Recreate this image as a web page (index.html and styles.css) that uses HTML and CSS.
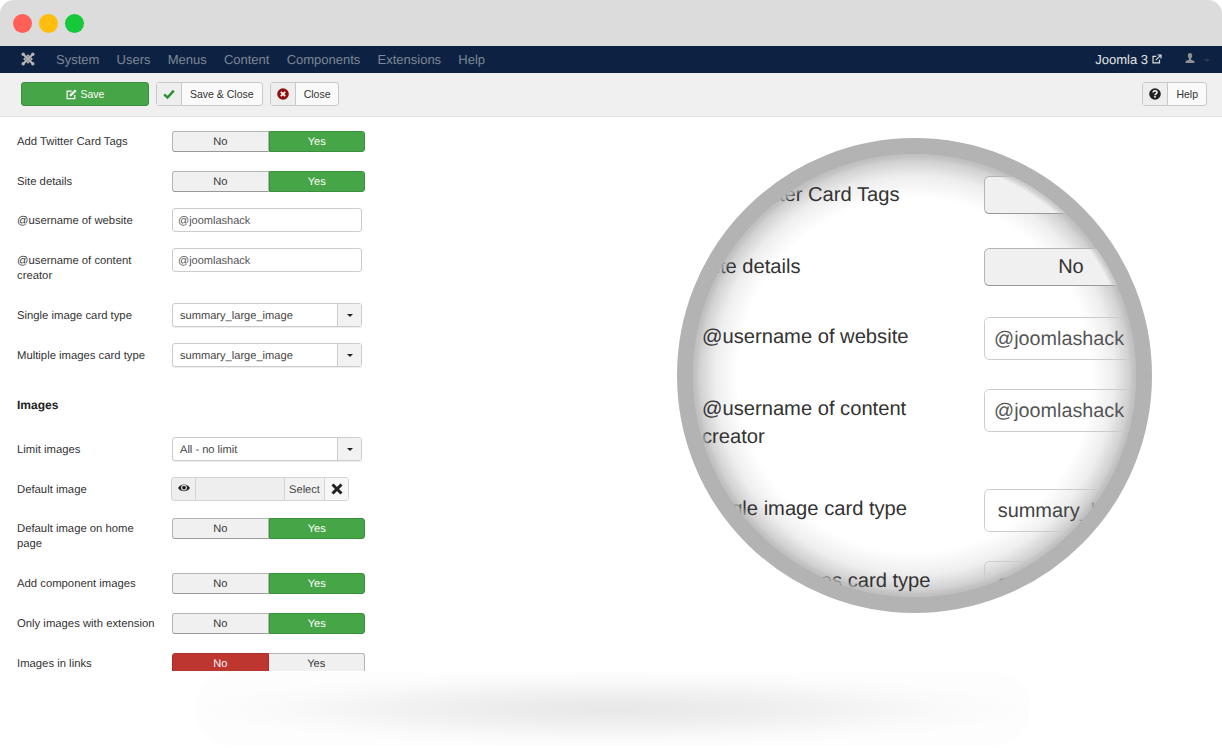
FILE: index.html
```html
<!DOCTYPE html>
<html lang="en">
<head>
    <meta charset="UTF-8">
    <meta name="viewport" content="width=device-width, initial-scale=1.0">
    <title>Joomla 3 - Twitter Card Tags</title>
    <link rel="stylesheet" href="styles.css">
</head>
<body>
    <div class="window">
        <div class="titlebar">
            <span class="dot dot-red"></span>
            <span class="dot dot-yellow"></span>
            <span class="dot dot-green"></span>
        </div>

        <nav class="navbar">
            <svg class="logo" viewBox="0 0 14 14" fill="none" stroke="#b4b4b4" stroke-width="2.1">
                <path d="M2.5 2.5 11.5 11.5M11.5 2.5 2.5 11.5"/>
                <path d="M7 3.2 10.8 7 7 10.8 3.2 7Z" stroke-width="1.5"/>
                <circle cx="2.2" cy="2.2" r="1.7" fill="#b4b4b4" stroke="none"/>
                <circle cx="11.8" cy="2.2" r="1.7" fill="#b4b4b4" stroke="none"/>
                <circle cx="2.2" cy="11.8" r="1.7" fill="#b4b4b4" stroke="none"/>
                <circle cx="11.8" cy="11.8" r="1.7" fill="#b4b4b4" stroke="none"/>
            </svg>
            <a class="nav-link">System</a>
            <a class="nav-link">Users</a>
            <a class="nav-link">Menus</a>
            <a class="nav-link">Content</a>
            <a class="nav-link">Components</a>
            <a class="nav-link">Extensions</a>
            <a class="nav-link">Help</a>
            <a class="site-link">Joomla 3
                <svg class="ext-icon" viewBox="0 0 10 10" fill="none" stroke="#ddd" stroke-width="1.2">
                    <path d="M7.5 5.8V8.9H1V2.4H4.2"/>
                    <path d="M3.8 6.2 8.6 1.4M5.6 1H9V4.4"/>
                </svg>
            </a>
            <svg class="user-icon" viewBox="0 0 10 11" fill="#8d8f93">
                <path d="M5 0C3.5 0 2.8 1.1 2.8 2.6 2.8 4 3.4 5 3.9 5.6V6.7L.6 8V10H9.4V8L6.1 6.7V5.6C6.6 5 7.2 4 7.2 2.6 7.2 1.1 6.5 0 5 0Z"/>
            </svg>
            <span class="user-caret"></span>
        </nav>

        <div class="toolbar">
            <button class="btn-save">
                <svg class="icon" viewBox="0 0 12 12" fill="none" stroke="#fff" stroke-width="1.3">
                    <path d="M9.6 6.6V10.4H1.2V2.4H6.2"/>
                    <path d="M4.6 5.8 9.8.9 11.2 2.3 6.1 7.4 4.3 7.7Z" fill="#fff" stroke-width=".6"/>
                </svg>
                Save
            </button>
            <button class="btn">
                <span class="btn-icon">
                    <svg class="icon" viewBox="0 0 12 12" fill="none" stroke="#2f8f2f" stroke-width="2.4"><path d="M1.2 6.3 4.5 9.5 10.8 2.6"/></svg>
                </span>
                <span class="btn-label">Save &amp; Close</span>
            </button>
            <button class="btn">
                <span class="btn-icon">
                    <svg class="icon" viewBox="0 0 12 12">
                        <circle cx="6" cy="6" r="5.8" fill="#8f1010"/>
                        <path d="M3.8 3.8 8.2 8.2M8.2 3.8 3.8 8.2" stroke="#fff" stroke-width="1.7"/>
                    </svg>
                </span>
                <span class="btn-label">Close</span>
            </button>
            <button class="btn btn-help">
                <span class="btn-icon">
                    <svg class="icon" viewBox="0 0 12 12">
                        <circle cx="6" cy="6" r="5.8" fill="#222"/>
                        <path d="M4.1 4.6C4.1 2 8 2.2 8 4.4 8 5.8 6 5.8 6 7.2" fill="none" stroke="#fff" stroke-width="1.5"/>
                        <rect x="5.2" y="8" width="1.6" height="1.6" fill="#fff"/>
                    </svg>
                </span>
                <span class="btn-label">Help</span>
            </button>
        </div>

        <div class="form">
            <div class="row">
                <label class="row-label">Add Twitter Card Tags</label>
                <div class="toggle"><span class="toggle-off">No</span><span class="toggle-yes">Yes</span></div>
            </div>
            <div class="row row-short">
                <label class="row-label">Site details</label>
                <div class="toggle"><span class="toggle-off">No</span><span class="toggle-yes">Yes</span></div>
            </div>
            <div class="row">
                <label class="row-label">@username of website</label>
                <div class="text-input">@joomlashack</div>
            </div>
            <div class="row row-tall">
                <label class="row-label">@username of content creator</label>
                <div class="text-input">@joomlashack</div>
            </div>
            <div class="row">
                <label class="row-label">Single image card type</label>
                <div class="select"><span class="select-value">summary_large_image</span><span class="select-arrow"><i class="caret"></i></span></div>
            </div>
            <div class="row">
                <label class="row-label">Multiple images card type</label>
                <div class="select"><span class="select-value">summary_large_image</span><span class="select-arrow"><i class="caret"></i></span></div>
            </div>

            <h4 class="section-title">Images</h4>

            <div class="row">
                <label class="row-label">Limit images</label>
                <div class="select"><span class="select-value">All - no limit</span><span class="select-arrow"><i class="caret"></i></span></div>
            </div>
            <div class="row row-short">
                <label class="row-label">Default image</label>
                <div class="media">
                    <span class="media-eye">
                        <svg class="icon" viewBox="0 0 12 12">
                            <path d="M0 6C1.5 3.4 3.6 2.4 6 2.4 8.4 2.4 10.5 3.4 12 6 10.5 8.2 8.4 9.2 6 9.2 3.6 9.2 1.5 8.2 0 6Z" fill="#222"/>
                            <circle cx="6" cy="5.7" r="2.9" fill="#eee"/>
                            <circle cx="6" cy="5.7" r="1.9" fill="#222"/>
                        </svg>
                    </span>
                    <span class="media-path"></span>
                    <span class="media-select">Select</span>
                    <span class="media-clear">
                        <svg class="icon icon-x" viewBox="0 0 12 12"><path d="M1.5 1.5 10.5 10.5M10.5 1.5 1.5 10.5" stroke="#222" stroke-width="3"/></svg>
                    </span>
                </div>
            </div>
            <div class="row row-tall">
                <label class="row-label">Default image on home page</label>
                <div class="toggle"><span class="toggle-off">No</span><span class="toggle-yes">Yes</span></div>
            </div>
            <div class="row">
                <label class="row-label">Add component images</label>
                <div class="toggle"><span class="toggle-off">No</span><span class="toggle-yes">Yes</span></div>
            </div>
            <div class="row">
                <label class="row-label">Only images with extension</label>
                <div class="toggle"><span class="toggle-off">No</span><span class="toggle-yes">Yes</span></div>
            </div>
            <div class="row">
                <label class="row-label">Images in links</label>
                <div class="toggle"><span class="toggle-no">No</span><span class="toggle-off">Yes</span></div>
            </div>
        </div>
    </div>

    <div class="ground-shadow"></div>

    <!-- magnifier over the form -->
    <div class="lens">
        <div class="form lens-form">
            <div class="row">
                <label class="row-label">Add Twitter Card Tags</label>
                <div class="toggle"><span class="toggle-off">No</span></div>
            </div>
            <div class="row row-short">
                <label class="row-label">Site details</label>
                <div class="toggle"><span class="toggle-off">No</span></div>
            </div>
            <div class="row">
                <label class="row-label">@username of website</label>
                <div class="text-input">@joomlashack</div>
            </div>
            <div class="row row-tall">
                <label class="row-label">@username of content creator</label>
                <div class="text-input">@joomlashack</div>
            </div>
            <div class="row">
                <label class="row-label">Single image card type</label>
                <div class="select"><span class="select-value">summary_large_image</span><span class="select-arrow"><i class="caret"></i></span></div>
            </div>
            <div class="row">
                <label class="row-label">Multiple images card type</label>
                <div class="select"><span class="select-value">summary_large_image</span><span class="select-arrow"><i class="caret"></i></span></div>
            </div>
        </div>
    </div>
</body>
</html>
```

FILE: styles.css
```css
* {
    box-sizing: border-box;
}
body {
    margin: 0;
    height: 748px;
    overflow: hidden;
    position: relative;
    background-color: #ffffff;
    color: #333333;
    font-family: "Liberation Sans", Arial, sans-serif;
    text-rendering: geometricPrecision;
}
.window {
    height: 671px;
    display: flex;
    flex-direction: column;
    overflow: hidden;
    background-color: #ffffff;
    border-radius: 14px;
}

/* title bar */
.titlebar {
    height: 46px;
    flex: none;
    display: flex;
    align-items: center;
    gap: 7px;
    padding-left: 13px;
    background-color: #dcdcdc;
}
.dot {
    width: 19px;
    height: 19px;
    border-radius: 50%;
}
.dot-red {
    background-color: #ff6058;
}
.dot-yellow {
    background-color: #ffbd0e;
}
.dot-green {
    background-color: #15c93a;
}

/* admin menu */
.navbar {
    height: 27px;
    flex: none;
    display: flex;
    align-items: center;
    padding: 0 12px 1px 21px;
    background-color: #0d2242;
    font-size: 13px;
}
.logo {
    width: 14px;
    height: 14px;
    margin-right: 21px;
}
.nav-link {
    margin-right: 17.2px;
    color: #7e8796;
}
.site-link {
    margin-left: auto;
    display: flex;
    align-items: center;
    gap: 4px;
    color: #e4e4e4;
}
.ext-icon {
    width: 10px;
    height: 10px;
}
.user-icon {
    width: 10px;
    height: 11px;
    margin: 0 0 2px 23px;
}
.user-caret {
    width: 0;
    height: 0;
    margin: 2px 0 0 9px;
    border: 3px solid transparent;
    border-top: 3px solid #2a3850;
    border-bottom: 0;
}

/* toolbar */
.toolbar {
    height: 44px;
    flex: none;
    display: flex;
    gap: 7px;
    padding: 9px 15px 0 21px;
    background-color: #f0f0f0;
    border-bottom: 1px solid #e4e4e4;
}
.toolbar button {
    height: 24px;
    padding: 0;
    display: flex;
    align-items: stretch;
    font-family: inherit;
    font-size: 10.5px;
    color: #333333;
    border-radius: 3px;
}
.icon {
    width: 12px;
    height: 12px;
}
.toolbar .btn-save {
    width: 128px;
    align-items: center;
    justify-content: center;
    gap: 4px;
    background-color: #46a546;
    border: 1px solid #3a8f3d;
    color: #ffffff;
}
.btn-save .icon {
    width: 11px;
    height: 11px;
}
.btn {
    background-color: #fafafa;
    border: 1px solid #c8c8c8;
}
.btn-icon {
    width: 25px;
    display: flex;
    align-items: center;
    justify-content: center;
    background-color: #eeeeee;
    border-right: 1px solid #c8c8c8;
}
.btn-label {
    padding: 0 8px;
    line-height: 22px;
}
.btn-help {
    margin-left: auto;
}

/* form rows */
.form {
    flex: 1;
    padding: 12px 0 0 17px;
}
.row {
    display: flex;
    min-height: 24px;
    margin-bottom: 16px;
}
.row-short {
    margin-bottom: 15px;
}
.row-tall {
    min-height: 39px;
}
.row-label {
    width: 155px;
    flex: none;
    padding: 5.5px 15px 0 0;
    font-size: 11.3px;
    line-height: 15.5px;
}
.section-title {
    margin: 0;
    height: 54px;
    padding-top: 14px;
    font-size: 12px;
    line-height: 16px;
    font-weight: bold;
    color: #222222;
}

/* yes/no switch */
.toggle {
    width: 193px;
    height: 21px;
    margin-top: 2px;
    display: flex;
    font-size: 11.1px;
    line-height: 20px;
    text-align: center;
}
.toggle span {
    width: 50%;
    flex: none;
}
.toggle-off {
    background-color: #f0f0f0;
    border: 1px solid #b4b4b4;
    border-bottom-color: #999999;
    border-radius: 3px 0 0 3px;
    color: #333333;
}
.toggle-yes {
    background-color: #46a546;
    border: 1px solid #3a8f3d;
    border-radius: 0 3px 3px 0;
    color: #ffffff;
}
.toggle-no {
    background-color: #bd362f;
    border: 1px solid #a92f29;
    border-radius: 3px 0 0 3px;
    color: #ffffff;
}
.toggle-no + .toggle-off {
    border-radius: 0 3px 3px 0;
    border-left: 0;
}

/* inputs */
.text-input {
    width: 190px;
    height: 24px;
    padding-left: 5px;
    background-color: #ffffff;
    border: 1px solid #cccccc;
    border-radius: 3px;
    font-size: 11px;
    line-height: 24px;
    color: #555555;
}
.select {
    width: 190px;
    height: 24px;
    display: flex;
    background-color: #ffffff;
    border: 1px solid #cccccc;
    border-radius: 3px;
    box-shadow: 0 1px 1px rgba(0, 0, 0, 0.08);
    font-size: 11.1px;
    line-height: 24px;
    color: #444444;
}
.select-value {
    flex: 1;
    padding-left: 7px;
}
.select-arrow {
    width: 24px;
    display: flex;
    align-items: center;
    justify-content: center;
    background-color: #f2f2f2;
    border-left: 1px solid #cccccc;
}
.caret {
    width: 0;
    height: 0;
    border: 3.5px solid transparent;
    border-top: 3.5px solid #222222;
    border-bottom: 0;
}
.media {
    width: 178px;
    height: 24px;
    margin-left: -1px;
    display: flex;
    background-color: #eeeeee;
    border: 1px solid #d4d4d4;
    border-radius: 3px;
    font-size: 11.1px;
    line-height: 24px;
    color: #444444;
}
.media-eye {
    width: 24px;
    display: flex;
    align-items: center;
    justify-content: center;
    padding-bottom: 2px;
    border-right: 1px solid #d4d4d4;
}
.media-path {
    flex: 1;
}
.media-select {
    width: 41px;
    height: 22px;
    text-align: center;
    background-color: #f2f2f2;
    border-left: 1px solid #d4d4d4;
    border-right: 1px solid #d4d4d4;
}
.media-clear {
    width: 23px;
    display: flex;
    align-items: center;
    justify-content: center;
    background-color: #f7f7f7;
}

/* soft shadow under the window */
.ground-shadow {
    width: 836px;
    height: 74px;
    margin: 1px 0 0 195px;
    border-radius: 37px;
    background: radial-gradient(ellipse closest-side, #e8e8e8 0%, #ececec 25%, #f3f3f3 55%, #fafafa 80%, #fdfdfd 100%);
}

/* magnifying glass */
.lens {
    position: absolute;
    left: 677px;
    top: 138px;
    width: 475px;
    height: 475px;
    overflow: hidden;
    border: 16px solid #b3b3b3;
    border-radius: 50%;
    background: radial-gradient(circle closest-side, #ffffff 80%, #eeeeee 90%, #c4c4c4 100%);
}
.lens::after {
    content: "";
    position: absolute;
    inset: 0;
    border-radius: 50%;
    background: radial-gradient(circle closest-side, rgba(190, 190, 190, 0) 97%, rgba(190, 190, 190, 0.9) 100%);
}
.lens-form {
    zoom: 1.8;
    width: 400px;
    padding: 11.7px 0 0 5px;
}
.lens-form .row-label {
    width: 156.7px;
    padding-top: 4px;
    font-size: 11.2px;
}
.lens-form .row-tall {
    min-height: 39.5px;
}
.lens-form .toggle {
    margin-top: 0.5px;
}
.lens-form .text-input,
.lens-form .select {
    background-color: transparent;
    box-shadow: none;
}
```
